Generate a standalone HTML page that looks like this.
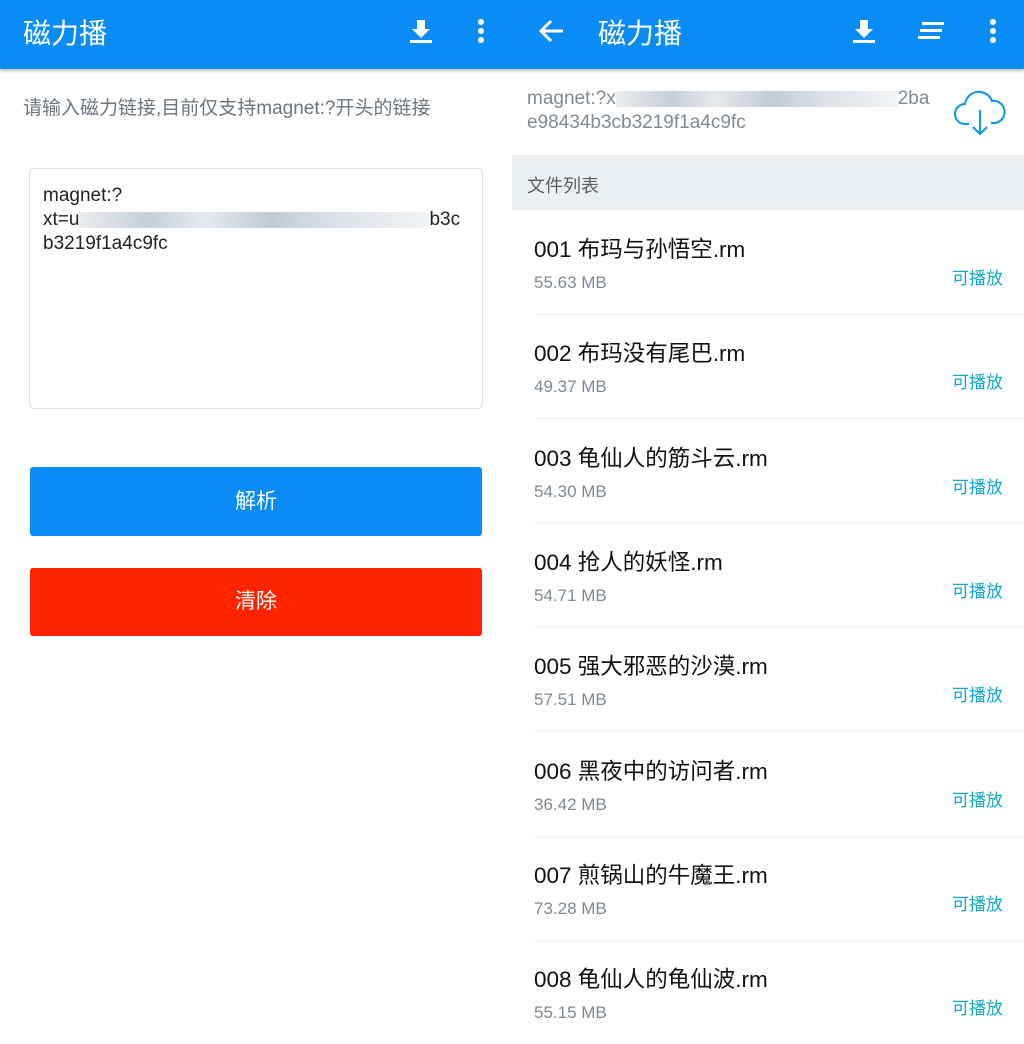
<!DOCTYPE html>
<html><head><meta charset="utf-8"><style>
*{margin:0;padding:0;box-sizing:border-box}
body{width:1024px;height:1044px;background:#fff;position:relative;overflow:hidden;font-family:"Liberation Sans","Noto Sans CJK SC",sans-serif}
.a{position:absolute}
.bar{top:0;height:69px;background:#0a8cf7;box-shadow:0 2px 3px rgba(0,0,0,.25)}
.t{color:#fff;font-size:28px;top:12px}
.blur{background:linear-gradient(90deg,#e6eaee,#b8c2ca 20%,#dfe5ea 35%,#b4bec7 55%,#d5dce2 75%,#eef1f4);opacity:.8}
.row .n{font-size:22.5px;color:#111}
.sz{font-size:17px;color:#7f8a94}
.pl{font-size:17px;color:#10aac8}
.div{height:1px;background:#ececec;left:534px;width:490px}
</style></head><body>
<div class="a bar" style="left:0;width:1024px"></div>
<div class="a t" style="left:23px">磁力播</div>
<svg class="a" style="left:408px;top:18px" width="26" height="26" viewBox="0 0 26 26"><path d="M9 2h8v9h5l-9 9-9-9h5z" fill="#fff"/><rect x="2" y="22" width="22" height="3" fill="#fff"/></svg>
<svg class="a" style="left:474px;top:18px" width="14" height="26"><circle cx="7" cy="4" r="3" fill="#fff"/><circle cx="7" cy="13" r="3" fill="#fff"/><circle cx="7" cy="22" r="3" fill="#fff"/></svg>
<svg class="a" style="left:538px;top:18px" width="28" height="26"><path d="M25 13H4M13 3L3 13l10 10" stroke="#fff" stroke-width="3" fill="none"/></svg>
<div class="a t" style="left:598px">磁力播</div>
<svg class="a" style="left:851px;top:18px" width="26" height="26" viewBox="0 0 26 26"><path d="M9 2h8v9h5l-9 9-9-9h5z" fill="#fff"/><rect x="2" y="22" width="22" height="3" fill="#fff"/></svg>
<svg class="a" style="left:918px;top:20px" width="28" height="22"><rect x="4" y="2" width="22" height="3" fill="#fff"/><rect x="2" y="9" width="22" height="3" fill="#fff"/><rect x="0" y="16" width="22" height="3" fill="#fff"/></svg>
<svg class="a" style="left:986px;top:18px" width="14" height="26"><circle cx="7" cy="4" r="3" fill="#fff"/><circle cx="7" cy="13" r="3" fill="#fff"/><circle cx="7" cy="22" r="3" fill="#fff"/></svg>

<div class="a" style="left:23px;top:93px;font-size:19px;color:#6b7680">请输入磁力链接,目前仅支持magnet:?开头的链接</div>
<div class="a" style="left:29px;top:168px;width:454px;height:241px;border:1px solid #dde1e5;border-radius:5px"></div>
<div class="a" style="left:43px;top:184px;font-size:19px;line-height:24px;color:#222">magnet:?<br>xt=u<span style="display:inline-block;width:350px;height:16px;vertical-align:middle" class="blur"></span>b3c<br>b3219f1a4c9fc</div>
<div class="a" style="left:30px;top:467px;width:452px;height:69px;background:#0a8cf7;border-radius:3px;color:#fff;font-size:21px;text-align:center;line-height:69px">解析</div>
<div class="a" style="left:30px;top:568px;width:452px;height:68px;background:#ff2300;border-radius:3px;color:#fff;font-size:21px;text-align:center;line-height:68px">清除</div>

<div class="a" style="left:527px;top:87px;font-size:19px;line-height:24px;color:#7f8a94">magnet:?x<span style="display:inline-block;width:282px;height:16px;vertical-align:middle" class="blur"></span>2ba<br>e98434b3cb3219f1a4c9fc</div>
<svg class="a" style="left:953px;top:90px" width="56" height="48" viewBox="0 0 56 48"><path d="M16 34H12a10 10 0 0 1 0-20 14 14 0 0 1 27-3 11 11 0 0 1 3 22H38" fill="none" stroke="#1a9be8" stroke-width="2.2"/><path d="M27 20v24M20 37l7 7 7-7" fill="none" stroke="#1a9be8" stroke-width="2.2"/></svg>
<div class="a" style="left:512px;top:155px;width:512px;height:55px;background:#edf0f3"></div>
<div class="a" style="left:527px;top:172px;font-size:18px;color:#555f68">文件列表</div>

<div id="list"></div>
<script>
var d=[["001 布玛与孙悟空.rm","55.63 MB"],["002 布玛没有尾巴.rm","49.37 MB"],["003 龟仙人的筋斗云.rm","54.30 MB"],["004 抢人的妖怪.rm","54.71 MB"],["005 强大邪恶的沙漠.rm","57.51 MB"],["006 黑夜中的访问者.rm","36.42 MB"],["007 煎锅山的牛魔王.rm","73.28 MB"],["008 龟仙人的龟仙波.rm","55.15 MB"]];
var h="";d.forEach(function(r,i){var y=210+i*104.3;
h+='<div class="a row" style="left:534px;top:'+(y+22)+'px"><span class="n">'+r[0]+'</span></div>';
h+='<div class="a sz" style="left:534px;top:'+(y+63)+'px">'+r[1]+'</div>';
h+='<div class="a pl" style="left:952px;top:'+(y+54)+'px">可播放</div>';
if(i<7)h+='<div class="a div" style="top:'+(y+104)+'px"></div>';});
document.getElementById("list").innerHTML=h;
</script>
</body></html>
